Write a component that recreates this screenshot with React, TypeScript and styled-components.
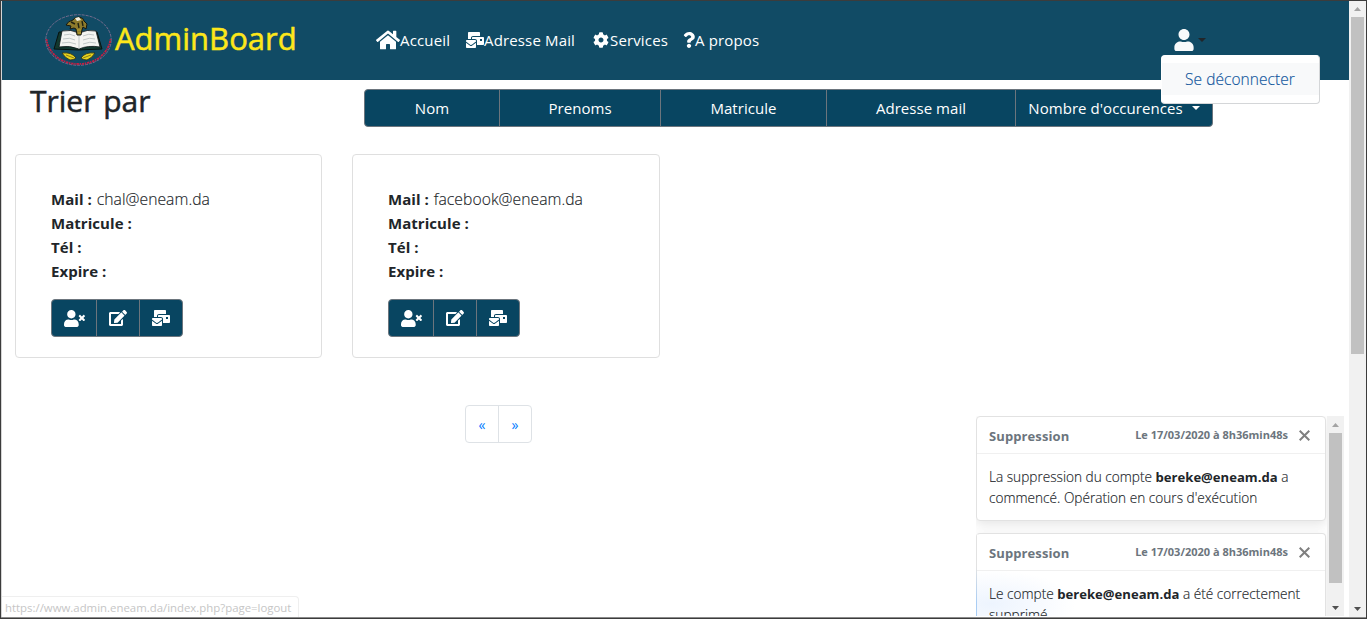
import React from "react";
import styled, { createGlobalStyle, css } from "styled-components";
import { FaHome, FaMailBulk, FaCog, FaQuestion, FaUser, FaUserTimes, FaEdit } from "react-icons/fa";

const GlobalStyle = createGlobalStyle`
  * { box-sizing: border-box; }
  body { margin: 0; overflow: hidden; }
`;

const Window = styled.div`
  position: relative;
  display: flex;
  width: 1367px;
  height: 619px;
  padding: 1px 1px 2px;
  overflow: hidden;
  background: #fff;
  color: #212529;
  font: 400 15px/24px "Open Sans", "Noto Sans", sans-serif;
  white-space: nowrap;
`;

const Frame = styled.div`
  position: absolute;
  inset: 0;
  border: 1px solid #3c3c3c;
  box-shadow: inset 0 -1px 0 #8b8b8b, inset 1px 0 0 #d5d5d5;
  pointer-events: none;
`;

const Content = styled.div`
  flex: 1;
  display: flex;
  flex-direction: column;
  min-width: 0;
`;

const Header = styled.header`
  display: flex;
  height: 79px;
  flex: none;
  padding-left: 43px;
  background: #114b65;
`;

const Brand = styled.a`
  display: flex;
  width: 332px;
  color: #fde71a;
  font-size: 31px;
  font-weight: 500;
  line-height: 40px;
  padding-top: 11px;
`;

const BrandName = styled.span`
  padding: 6px 0 0 2px;
  -webkit-text-stroke: 0.5px currentColor;
`;

const Nav = styled.nav`
  display: flex;
  width: 798px;
  padding-top: 27px;
  color: #fff;
`;

const NavLink = styled.a<{ $w: number }>`
  display: flex;
  align-items: center;
  width: ${(p) => p.$w}px;
  height: 24px;
  letter-spacing: 0.15px;
  svg { flex: none; }
`;

const IconSlot = styled.span<{ $w: number }>`
  display: flex;
  justify-content: center;
  width: ${(p) => p.$w}px;
  flex: none;
  svg { flex: none; }
`;

const Caret = styled.i<{ $color: string }>`
  width: 0;
  height: 0;
  border: 4.5px solid transparent;
  border-top-color: ${(p) => p.$color};
  border-bottom: 0;
`;

const Account = styled.div`
  display: flex;
  gap: 4px;
  padding-top: 28px;
  color: #f8f9fa;
  ${Caret} { margin-top: 9px; }
`;

const SortRow = styled.section`
  display: flex;
  height: 74px;
  flex: none;
  padding-left: 29px;
`;

const SortTitle = styled.h2`
  width: 334px;
  margin: 1px 0 0;
  font-size: 30px;
  font-weight: 500;
  line-height: 40px;
  -webkit-text-stroke: 0.5px currentColor;
`;

const group = css`
  display: flex;
  height: 38px;
  border: 1px solid #6c757d;
  border-radius: 4px;
  background: #084561;
  color: #fff;
  overflow: hidden;
`;

const SortGroup = styled.div`
  ${group}
  margin-top: 9px;
`;

const GroupButton = styled.button<{ $w: number }>`
  display: flex;
  align-items: center;
  justify-content: center;
  gap: 9px;
  width: ${(p) => p.$w}px;
  padding: 0;
  border: 0;
  background: none;
  color: inherit;
  font: inherit;
  letter-spacing: 0.05px;
  & + & { border-left: 1px solid #6c757d; }
`;

const Cards = styled.section`
  display: flex;
  gap: 30px;
  padding-left: 14px;
`;

const Card = styled.article<{ $w: number }>`
  width: ${(p) => p.$w}px;
  height: 204px;
  padding: 32px 35px;
  border: 1px solid #dfdfdf;
  border-radius: 4px;
`;

const Field = styled.div`
  height: 24px;
  b { font-weight: 700; letter-spacing: 0.05px; }
`;

const Light = styled.span`
  font-size: 15.7px;
  font-weight: 300;
  letter-spacing: 0.05px;
  -webkit-text-stroke: 0.15px currentColor;
`;

const MailAddress = styled(Light)`
  margin-left: 1px;
`;

const CardActions = styled.div`
  ${group}
  width: 132px;
  margin-top: 16px;
`;

const Pagination = styled.div`
  display: flex;
  width: 67px;
  height: 38px;
  margin: 47px 0 0 464px;
  border: 1px solid #dee2e6;
  border-radius: 4px;
`;

const PageLink = styled.a`
  flex: 1;
  color: #007bff;
  font-size: 14px;
  line-height: 37px;
  text-align: center;
  & + & { border-left: 1px solid #dee2e6; }
`;

const Menu = styled.div`
  position: absolute;
  left: 1161px;
  top: 55px;
  width: 159px;
  height: 49px;
  padding: 7px 0;
  border: 1px solid #d4d6d8;
  border-top-color: #fff;
  border-left-color: #fff;
  border-radius: 4px;
  background: #fff;
`;

const MenuItem = styled.a`
  display: block;
  height: 32px;
  padding-left: 23px;
  background: #f8f9fa;
  color: #0f559c;
  line-height: 33px;
  ${Light} { font-size: 15.5px; }
`;

const Track = styled.div`
  display: flex;
  flex-direction: column;
  align-items: center;
  width: 17px;
  flex: none;
  background: #f1f1f1;
`;

const Thumb = styled.div<{ $h: number }>`
  width: 13px;
  height: ${(p) => p.$h}px;
  background: #c1c1c1;
`;

const ArrowCell = styled.div<{ $h: number; $end?: boolean }>`
  display: flex;
  justify-content: center;
  align-items: center;
  height: ${(p) => p.$h}px;
  flex: none;
  margin-top: ${(p) => (p.$end ? "auto" : "0")};
`;

const Toasts = styled.aside`
  position: absolute;
  left: 976px;
  top: 416px;
  display: flex;
  width: 368px;
  height: 200px;
  overflow: hidden;
`;

const ToastList = styled.div`
  display: flex;
  flex-direction: column;
  gap: 12px;
  width: 351px;
`;

const Toast = styled.div<{ $glow?: boolean }>`
  width: 350px;
  height: 105px;
  flex: none;
  border: 1px solid #e2e2e2;
  border-radius: 4px;
  background: #fff;
  box-shadow: 0 4px 12px rgba(0, 0, 0, 0.1);
  ${(p) =>
    p.$glow &&
    css`
      background:
        linear-gradient(#e2e2e2 34px, #a9cdf4 70px) 0 0 / 1px 100% no-repeat border-box,
        radial-gradient(ellipse 85px 34px at 14px 70px, #edf4fe, #fff);
      border-left-color: transparent;
    `}
`;

const ToastHead = styled.div`
  display: flex;
  align-items: center;
  height: 37px;
  padding: 1px 15px 0 12px;
  border-bottom: 1px solid #f0f0f0;
  color: #6c757d;
  font-weight: 700;
  font-size: 13px;
  letter-spacing: 0.1px;
`;

const ToastDate = styled.span`
  margin: 0 11px 2px auto;
  font-size: 11px;
  letter-spacing: 0;
`;

const ToastBody = styled.div`
  padding: 12px;
  font-size: 13.65px;
  font-weight: 300;
  line-height: 21px;
  -webkit-text-stroke: 0.15px currentColor;
  b {
    font-size: 13.1px;
    font-weight: 700;
    line-height: 1;
    -webkit-text-stroke: 0;
  }
`;

const Status = styled.div`
  position: absolute;
  left: 1px;
  bottom: 2px;
  width: 298px;
  height: 21px;
  padding-left: 4px;
  border: 1px solid #efefef;
  border-left: 0;
  border-bottom: 0;
  border-top-right-radius: 4px;
  color: #c6c6c6;
  font-size: 11.4px;
  line-height: 22px;
`;

const Arrow = ({ down, color }: { down?: boolean; color: string }) => (
  <svg width="7" height="4" viewBox="0 0 7 4">
    <path d={down ? "M0 0h7L3.5 4z" : "M0 4h7L3.5 0z"} fill={color} />
  </svg>
);

const Scrollbar = ({ thumb, cap }: { thumb: number; cap: number }) => (
  <Track>
    <ArrowCell $h={cap}><Arrow color="#a3a3a3" /></ArrowCell>
    <Thumb $h={thumb} />
    <ArrowCell $h={16} $end><Arrow down color="#505050" /></ArrowCell>
  </Track>
);

const Crest = () => (
  <svg width="69" height="56" viewBox="0 0 69 56">
    <ellipse cx="34.5" cy="28" rx="32.7" ry="25.3" fill="none" stroke="#8e7497" strokeWidth="0.8" strokeDasharray="3 1" />
    <path d="M2.5 27C4 40 16 52 34.5 52S65 40 66.5 27" fill="none" stroke="#c51f43" strokeWidth="1.8" strokeDasharray="2.4 .7 1.4 .8" />
    <path d="M15 20L10 37l24 1 24-1-5-17z" fill="#12382e" stroke="#07120f" />
    <path d="M18 19q9-2 17 2 8-4 17-2l4 16q-12-2-21 2-9-4-20-2z" fill="#f4f4f1" stroke="#0d1518" strokeWidth=".8" />
    <path d="M35 22v15M20 23q6-2 11 1M19 27q7-2 12 1M18 31q7-2 14 1M39 24q6-3 11-1M39 28q7-3 12-1M39 32q7-3 13-1" fill="none" stroke="#b4bbbb" strokeWidth=".8" />
    <path d="M22 13q2-4 7-5 1-3 6-3 5 1 5 4l3 3-1 5-3-2-1 3-1 5h-4l-1-6-2-1-4 1 1-3z" fill="#8d7b2c" stroke="#15180f" strokeWidth="1" />
    <path d="M31 6l4-1 2 3-4 1z" fill="#f0eee0" />
    <path d="M27 10l4 2M34 11l1 5M38 9l1 5" stroke="#202313" strokeWidth="1.4" />
    <path d="M33 18h4M34 21h3" stroke="#b9a42c" strokeWidth="1.2" />
    <path d="M18 41q10-1 14 5-2 2-6 2-5-2-8-7zM51 41q-10-1-14 5 2 2 6 2 5-2 8-7z" fill="#e6d31f" stroke="#292c14" strokeWidth=".8" />
    <path d="M22 43l8 3M47 43l-8 3" stroke="#4a4719" strokeWidth=".6" />
  </svg>
);

const sorts = [
  { label: "Nom", w: 134 },
  { label: "Prenoms", w: 161 },
  { label: "Matricule", w: 166 },
  { label: "Adresse mail", w: 189 },
];

const AccountCard = ({ mail, w }: { mail: string; w: number }) => (
  <Card $w={w}>
    <Field><b>Mail :</b> <MailAddress>{mail}</MailAddress></Field>
    <Field><b>Matricule :</b></Field>
    <Field><b>Tél :</b></Field>
    <Field><b>Expire :</b></Field>
    <CardActions>
      <GroupButton $w={44}><FaUserTimes size={21} /></GroupButton>
      <GroupButton $w={43}><FaEdit size={18} /></GroupButton>
      <GroupButton $w={43}><FaMailBulk size={18} /></GroupButton>
    </CardActions>
  </Card>
);

const Notice = ({ glow, children }: { glow?: boolean; children: React.ReactNode }) => (
  <Toast $glow={glow}>
    <ToastHead>
      <span>Suppression</span>
      <ToastDate>Le 17/03/2020 à 8h36min48s</ToastDate>
      <svg width="11" height="11" viewBox="0 0 11 11">
        <path d="M.7.7l9.6 9.6M10.3.7L.7 10.3" stroke="#7f7f7f" strokeWidth="2" />
      </svg>
    </ToastHead>
    <ToastBody>{children}</ToastBody>
  </Toast>
);

export default function App() {
  return (
    <>
      <GlobalStyle />
      <Window>
        <Content>
          <Header>
            <Brand>
              <Crest />
              <BrandName>AdminBoard</BrandName>
            </Brand>
            <Nav>
              <NavLink $w={90}><FaHome size={24} />Accueil</NavLink>
              <NavLink $w={126}><FaMailBulk size={18} />Adresse Mail</NavLink>
              <NavLink $w={91}><IconSlot $w={18}><FaCog size={16} /></IconSlot>Services</NavLink>
              <NavLink $w={90}><IconSlot $w={12}><FaQuestion size={16} /></IconSlot>A propos</NavLink>
            </Nav>
            <Account>
              <IconSlot $w={20}><FaUser size={22} /></IconSlot>
              <Caret $color="#212529" />
            </Account>
          </Header>
          <SortRow>
            <SortTitle>Trier par</SortTitle>
            <SortGroup>
              {sorts.map((s) => (
                <GroupButton key={s.label} $w={s.w}>{s.label}</GroupButton>
              ))}
              <GroupButton $w={197}>Nombre d'occurences<Caret $color="#fff" /></GroupButton>
            </SortGroup>
          </SortRow>
          <Cards>
            <AccountCard mail="chal@eneam.da" w={307} />
            <AccountCard mail="facebook@eneam.da" w={308} />
          </Cards>
          <Pagination>
            <PageLink>«</PageLink>
            <PageLink>»</PageLink>
          </Pagination>
        </Content>
        <Scrollbar thumb={337} cap={16} />
        <Menu><MenuItem><Light>Se déconnecter</Light></MenuItem></Menu>
        <Toasts>
          <ToastList>
            <Notice>
              La suppression du compte <b>bereke@eneam.da</b> a<br />
              commencé. Opération en cours d'exécution
            </Notice>
            <Notice glow>
              Le compte <b>bereke@eneam.da</b> a été correctement<br />
              supprimé
            </Notice>
          </ToastList>
          <Scrollbar thumb={150} cap={17} />
        </Toasts>
        <Status>https://www.admin.eneam.da/index.php?page=logout</Status>
        <Frame />
      </Window>
    </>
  );
}
